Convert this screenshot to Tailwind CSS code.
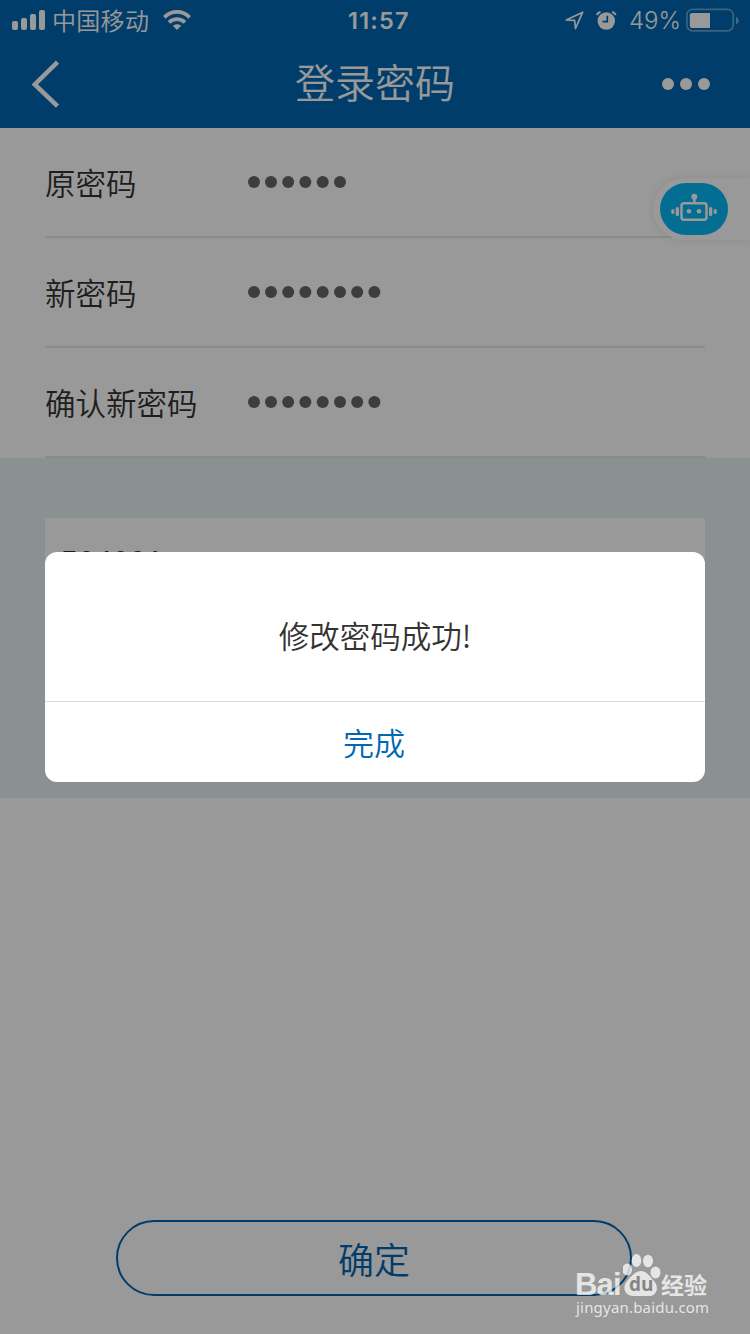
<!DOCTYPE html>
<html lang="zh-CN">
<head>
<meta charset="utf-8">
<title>登录密码</title>
<script src="https://cdn.jsdelivr.net/npm/@tailwindcss/browser@4"></script>
</head>
<body class="relative h-[1334px] w-[750px] overflow-hidden bg-white font-['Noto_Sans_CJK_SC',sans-serif] text-[#333]">
<div class="flex h-full flex-col">
  <header class="h-32 shrink-0 bg-[#0067b2] text-white">
    <div class="flex h-10 items-center px-3 text-2xl leading-10">
      <svg class="h-5 w-[33px] shrink-0" viewBox="0 0 33 20" fill="#fff"><rect y="11" width="6" height="9" rx="2"/><rect x="9" y="8" width="6" height="12" rx="2"/><rect x="18" y="4" width="6" height="16" rx="2"/><rect x="27" y="0" width="6" height="20" rx="2"/></svg>
      <span class="ml-[7px] w-[98px] shrink-0 whitespace-nowrap font-[350] tracking-[0.3px]">中国移动</span>
      <svg class="ml-[13px] h-5 w-7 shrink-0" viewBox="0 0 28 20" fill="none" stroke="#fff" stroke-width="3.8"><path d="M1.3 7.3C8.5.1 19.5.1 26.7 7.3"/><path d="M6 12.3c4.7-4.3 11.3-4.3 16 0"/><path d="M14 20l-4.3-4.3c2.5-2.1 6.1-2.1 8.600 0z" fill="#fff" stroke="none"/></svg>
      <span class="ml-[157px] w-16 shrink-0 whitespace-nowrap pt-0.5 font-['Inter',sans-serif] text-[23.500px] font-semibold tracking-[1.2px]">11:57</span>
      <svg class="ml-[153px] h-[19px] w-5 shrink-0" viewBox="0 0 20 19" fill="none" stroke="#fff" stroke-width="1.7" stroke-linejoin="round"><path d="M1.3 9L17.7 1.2 10.500 17.500 9.600 9.400z"/></svg>
      <svg class="ml-[11px] h-[19px] w-[21px] shrink-0" viewBox="0 0 21 19"><circle cx="10.300" cy="10" r="8.700" fill="#fff"/><path d="M.8 4A7 7 0 0 1 4.500.8M16.100.8A7 7 0 0 1 19.800 4" stroke="#fff" stroke-width="2" fill="none"/><path d="M11.300 4.700v6H6.500" stroke="#0067b2" stroke-width="1.700" fill="none"/></svg>
      <span class="ml-[12px] w-[50px] shrink-0 whitespace-nowrap pt-0.5 font-['Inter',sans-serif] text-[24px] font-[350]">49%</span>
      <svg class="ml-[7px] h-6 w-[53px] shrink-0" viewBox="0 0 53 24"><rect x=".9" y="1.400" width="46.300" height="21.400" rx="5.500" fill="none" stroke="#fff" stroke-opacity=".4" stroke-width="1.700"/><path d="M50 8.500q2.700 1.300 2.700 4t-2.700 4z" fill="#fff" fill-opacity=".45"/><path d="M6 5h18v15H6q-2.200 0-2.200-2.200V7.200Q3.800 5 6 5z" fill="#fff"/></svg>
    </div>
    <div class="flex h-[88px] items-center justify-between px-8">
      <svg class="h-12 w-[50px]" viewBox="0 0 50 48" fill="none" stroke="#fff" stroke-width="4.500"><path d="M25.500 2.200L2.800 24.500 25.500 46.200"/></svg>
      <h1 class="-translate-y-[3px] text-[40px] font-[350] leading-[60px]">登录密码</h1>
      <div class="flex w-[50px] gap-1.5"><i class="-ml-1.5 size-3 shrink-0 rounded-full bg-white"></i><i class="size-3 shrink-0 rounded-full bg-white"></i><i class="size-3 shrink-0 rounded-full bg-white"></i></div>
    </div>
  </header>
  <form class="shrink-0 px-[45px] text-[30.500px] font-[350]">
    <div class="flex h-[110px] items-center border-b-2 border-[#e8e8e8]"><label class="w-[203px] whitespace-nowrap pt-0.5">原密码</label><svg class="h-3 w-[150px]" fill="#666"><circle cx="6" cy="6" r="6"/><circle cx="23" cy="6" r="6"/><circle cx="40.200" cy="6" r="6"/><circle cx="57.400" cy="6" r="6"/><circle cx="74.700" cy="6" r="6"/><circle cx="92" cy="6" r="6"/></svg></div>
    <div class="flex h-[110px] items-center border-b-2 border-[#e8e8e8]"><label class="w-[203px] whitespace-nowrap pt-0.5">新密码</label><svg class="h-3 w-[150px]" fill="#666"><circle cx="6" cy="6" r="6"/><circle cx="23" cy="6" r="6"/><circle cx="40.200" cy="6" r="6"/><circle cx="57.400" cy="6" r="6"/><circle cx="74.700" cy="6" r="6"/><circle cx="92" cy="6" r="6"/><circle cx="109.200" cy="6" r="6"/><circle cx="126.400" cy="6" r="6"/></svg></div>
    <div class="flex h-[110px] items-center border-b-2 border-[#e8e8e8]"><label class="w-[203px] whitespace-nowrap pt-0.5">确认新密码</label><svg class="h-3 w-[150px]" fill="#666"><circle cx="6" cy="6" r="6"/><circle cx="23" cy="6" r="6"/><circle cx="40.200" cy="6" r="6"/><circle cx="57.400" cy="6" r="6"/><circle cx="74.700" cy="6" r="6"/><circle cx="92" cy="6" r="6"/><circle cx="109.200" cy="6" r="6"/><circle cx="126.400" cy="6" r="6"/></svg></div>
  </form>
  <section class="h-[340px] shrink-0 bg-[#e8f1f6] px-[45px] pt-[60px]">
    <div class="h-[220px] bg-white px-4 pt-[23px] font-['Liberation_Sans',sans-serif] text-[30px] leading-10 tracking-[0.4px]">504001</div>
  </section>
  <div class="flex grow items-end px-[116px] pb-[38px]">
    <button class="h-[76px] w-[516px] rounded-full border-2 border-[#0067b2] text-4xl font-[350] text-[#0067b2]">确定</button>
  </div>
</div>
<div class="absolute right-0 top-[178px] flex h-[62px] w-[97px] items-center rounded-l-full bg-white pl-[7px] shadow-[0_0_8px_rgba(0,0,0,0.09)]">
  <svg class="h-[52px] w-[68px]" viewBox="0 0 68 52"><rect width="68" height="52" rx="26" fill="#06b8f3"/><g fill="none" stroke="#fff" stroke-width="2.500"><rect x="21.500" y="20.300" width="25" height="16.500" rx="2.500"/><path d="M34.300 16v4"/></g><g fill="#fff"><circle cx="34.300" cy="13.800" r="3"/><circle cx="29" cy="28.300" r="2.300"/><circle cx="39" cy="28.300" r="2.300"/><rect x="15.700" y="24" width="3.300" height="9" rx="1.600"/><rect x="49" y="24" width="3.300" height="9" rx="1.600"/><rect x="11.300" y="26" width="3" height="5" rx="1.500"/><rect x="53.700" y="26" width="3" height="5" rx="1.500"/></g></svg>
</div>
<div class="absolute inset-0 bg-black/40"></div>
<div class="absolute left-[45px] top-[552px] flex h-[230px] w-[660px] flex-col rounded-xl bg-white text-center">
  <p class="h-[149px] pt-[61px] text-[30.500px] font-[350] leading-[45px]">修改密码成功!</p>
  <button class="grow border-t border-[#dadada] pr-0.5 text-[31px] font-[350] leading-[46px] text-[#0067b2]">完成</button>
</div>
<div class="absolute left-[575px] top-[1252px] w-[140px] text-white/75">
  <div class="flex h-[44px] items-end">
    <span class="w-[48px] font-['Liberation_Sans',sans-serif] text-[31px] font-bold leading-[22px] tracking-[-0.8px]">Bai</span>
    <div class="relative h-[44px] w-[39px] shrink-0">
      <svg class="h-full w-full" viewBox="0 0 39 44" fill="#fff" fill-opacity=".75"><ellipse cx="4.200" cy="17.500" rx="4.800" ry="6"/><ellipse cx="13.500" cy="8.500" rx="4.800" ry="6.500"/><ellipse cx="25" cy="9" rx="5" ry="6.300"/><ellipse cx="32.500" cy="20.500" rx="5" ry="6"/><path d="M18 19c6 0 8.500 5.500 12 9 7 6.500 4 16-4 16H10c-8 0-12-9-5-16 3.500-3.500 7-9 13-9z"/></svg>
      <span class="absolute left-[6px] top-[22px] font-['Open_Sans',sans-serif] text-[19px] font-bold leading-5 text-[#858585]">du</span>
    </div>
    <span class="-ml-px whitespace-nowrap text-[23px] font-bold leading-[24px]">经验</span>
  </div>
  <div class="ml-px whitespace-nowrap font-['Noto_Sans',sans-serif] text-[15px] leading-[22px] tracking-[0.2px]">jingyan.baidu.com</div>
</div>
</body>
</html>
